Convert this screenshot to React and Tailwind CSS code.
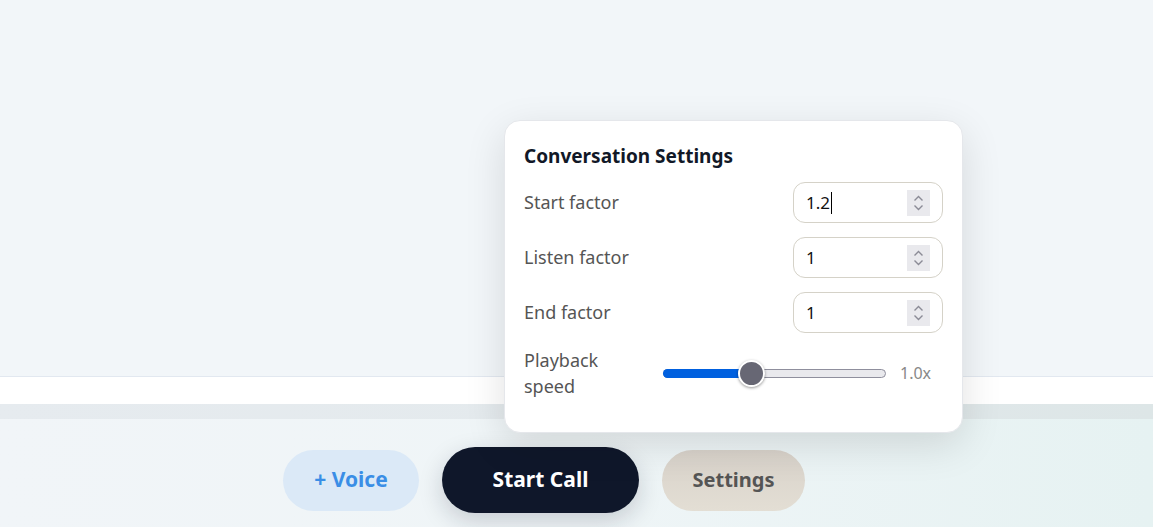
import React from "react";

const font = { fontFamily: '"Noto Sans", "Open Sans", sans-serif' };

function Spinner() {
  return (
    <div className="w-[23px] h-[26px] bg-[#e9e9ed] flex flex-col items-center justify-center gap-[2px]">
      <svg width="11" height="7" viewBox="0 0 11 7" fill="none">
        <path d="M1.5 5.5 L5.5 1.5 L9.5 5.5" stroke="#8b8b96" strokeWidth="1.4" />
      </svg>
      <svg width="11" height="7" viewBox="0 0 11 7" fill="none">
        <path d="M1.5 1.5 L5.5 5.5 L9.5 1.5" stroke="#8b8b96" strokeWidth="1.4" />
      </svg>
    </div>
  );
}

function NumberRow({ label, value, caret }) {
  return (
    <div className="flex items-center justify-between h-[41px]">
      <span className="text-[18px] text-[#555]">{label}</span>
      <div className="w-[150px] h-[41px] rounded-[12px] border border-[#d5d2c8] bg-white flex items-center pl-[12px] pr-[12px] justify-between">
        <span className="text-[17px] text-[#111] flex items-center">
          {value}
          {caret && <span className="inline-block w-px h-[22px] bg-black ml-[1px]" />}
        </span>
        <Spinner />
      </div>
    </div>
  );
}

export default function App() {
  return (
    <div className="relative w-[1153px] h-[527px] overflow-hidden flex flex-col" style={font}>
      <div className="h-[376px] bg-[#f2f6f9]" />
      <div className="h-[28px] bg-white border-t border-[#e2e8f0]" />
      <div className="h-[15px] bg-gradient-to-r from-[#e6ebef] via-[#e4eaed] to-[#dde6e7]" />
      <div className="flex-1 bg-gradient-to-r from-[#f1f5f8] via-[#eff5f7] to-[#e6f2f2] flex items-center pt-[14px] pl-[283px] gap-[23px]">
        <button className="w-[136px] h-[61px] rounded-full bg-[#dbe9f7] text-[#3a8ee6] font-bold text-[21px]">
          + Voice
        </button>
        <button className="w-[197px] h-[66px] rounded-full bg-[#0f172a] text-white font-bold text-[21px] shadow-[0_8px_24px_rgba(15,23,42,0.18)]">
          Start Call
        </button>
        <button className="w-[143px] h-[61px] rounded-full bg-gradient-to-b from-[#d8d2ca] to-[#e3ded4] text-[#555] font-bold text-[20px]">
          Settings
        </button>
      </div>

      <div className="absolute left-[504px] top-[120px] w-[459px] h-[313px] bg-white rounded-[16px] border border-[#e5e7eb] shadow-[0_12px_40px_rgba(0,0,0,0.12)] px-[19px] pt-[21px]">
        <h2 className="text-[19px] font-bold text-[#111827] leading-[28px]">Conversation Settings</h2>
        <div className="mt-[12px] flex flex-col gap-[14px]">
          <NumberRow label="Start factor" value="1.2" caret />
          <NumberRow label="Listen factor" value="1" />
          <NumberRow label="End factor" value="1" />
        </div>
        <div className="mt-[14px] flex items-center">
          <span className="w-[139px] text-[18px] text-[#555] leading-[26px]">
            Playback
            <br />
            speed
          </span>
          <div className="relative w-[223px] h-[26px] flex items-center">
            <div className="w-full h-[9px] rounded-full bg-[#e9e9ed] border border-[#8f8f9d]" />
            <div className="absolute left-0 w-[90px] h-[9px] rounded-full bg-[#0060df]" />
            <div className="absolute left-[75px] w-[27px] h-[27px] rounded-full bg-[#676774] border-2 border-white shadow-[0_1px_3px_rgba(0,0,0,0.4)]" />
          </div>
          <span className="ml-[14px] text-[16px] text-[#888]">1.0x</span>
        </div>
      </div>
    </div>
  );
}
